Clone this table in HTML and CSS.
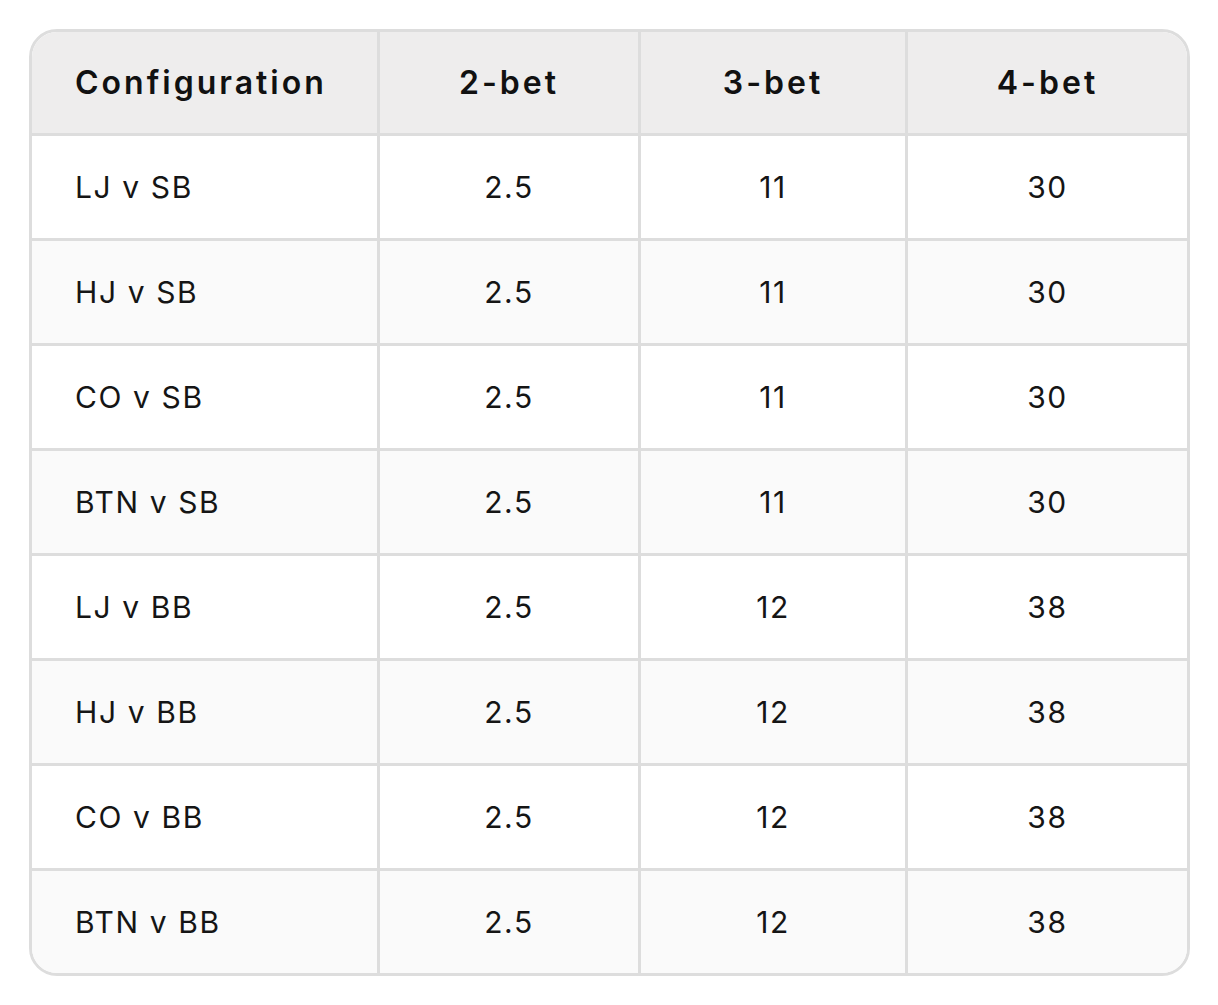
FILE: index.html
```html
<!DOCTYPE html>
<html lang="en">
<head>
<meta charset="utf-8">
<title>Bet sizes</title>
<link rel="stylesheet" href="styles.css">
</head>
<body>
<div class="table" role="table">
  <div class="row head" role="row">
    <div class="cell first" role="columnheader">Configuration</div>
    <div class="cell" role="columnheader">2-bet</div>
    <div class="cell" role="columnheader">3-bet</div>
    <div class="cell last" role="columnheader">4-bet</div>
  </div>
  <div class="row" role="row"><div class="cell first">LJ v SB</div><div class="cell">2.5</div><div class="cell">11</div><div class="cell last">30</div></div>
  <div class="row alt" role="row"><div class="cell first">HJ v SB</div><div class="cell">2.5</div><div class="cell">11</div><div class="cell last">30</div></div>
  <div class="row" role="row"><div class="cell first">CO v SB</div><div class="cell">2.5</div><div class="cell">11</div><div class="cell last">30</div></div>
  <div class="row alt" role="row"><div class="cell first">BTN v SB</div><div class="cell">2.5</div><div class="cell">11</div><div class="cell last">30</div></div>
  <div class="row" role="row"><div class="cell first">LJ v BB</div><div class="cell">2.5</div><div class="cell">12</div><div class="cell last">38</div></div>
  <div class="row alt" role="row"><div class="cell first">HJ v BB</div><div class="cell">2.5</div><div class="cell">12</div><div class="cell last">38</div></div>
  <div class="row" role="row"><div class="cell first">CO v BB</div><div class="cell">2.5</div><div class="cell">12</div><div class="cell last">38</div></div>
  <div class="row alt lastrow" role="row"><div class="cell first">BTN v BB</div><div class="cell">2.5</div><div class="cell">12</div><div class="cell last">38</div></div>
</div>
</body>
</html>
```
FILE: styles.css
```css
* { box-sizing: border-box; }
html, body { margin: 0; padding: 0; background: #ffffff; }
body {
  padding: 29px 28px 0 29px;
  font-family: Inter, "Noto Sans", sans-serif;
  color: #151515;
}
.table {
  border: 3px solid #dddddd;
  border-radius: 28px;
  overflow: hidden;
  width: 1161px;
}
.row {
  display: grid;
  grid-template-columns: 348px 261px 267px 1fr;
  height: 105px;
  border-bottom: 3px solid #dddddd;
  background: #ffffff;
}
.row.lastrow { border-bottom: none; height: 102px; }
.row.head { background: #eeeded; height: 104px; }
.row.alt { background: #fafafa; }
.cell {
  display: flex;
  align-items: center;
  justify-content: center;
  border-right: 3px solid #dddddd;
  font-size: 30px;
  font-weight: 400;
  letter-spacing: 1.6px;
}
.cell.first { justify-content: flex-start; padding-left: 43px; }
.cell.last { border-right: none; }
.head .cell {
  font-size: 32px;
  font-weight: 600;
  letter-spacing: 3px;
  color: #111111;
}
```
